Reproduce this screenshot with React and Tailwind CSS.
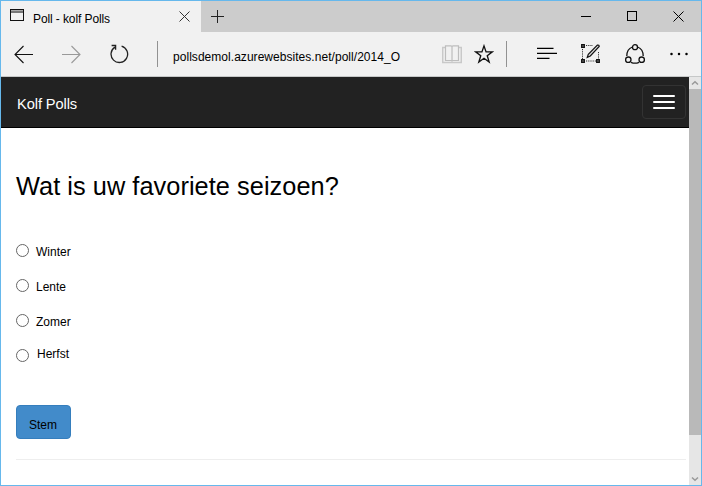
import React from 'react';

function TitleBar() {
  return (
    <header className="flex h-[31px] shrink-0 bg-[#cccccc]">
      <div className="flex w-[200px] bg-[#f1f1f1]">
        <svg className="ml-[9px] mt-[8px] h-[13px] w-[14px] shrink-0" viewBox="0 0 14 13" shapeRendering="crispEdges">
          <rect x="0.5" y="0.5" width="13" height="11" fill="none" stroke="#111" />
          <rect x="1" y="1" width="12" height="1" fill="#aaa" />
          <rect x="1" y="2" width="12" height="2" fill="#777" />
        </svg>
        <span className="ml-[9px] mt-[10px] w-[120px] whitespace-nowrap text-[12px] leading-4 tracking-[-0.1px] text-black">
          Poll - kolf Polls
        </span>
        <svg className="ml-[26px] mt-[10px] h-[11px] w-[11px] shrink-0" viewBox="0 0 11 11">
          <path d="M0.5 0.5 10.5 10.5M10.5 0.5 0.5 10.5" stroke="#333" fill="none" />
        </svg>
      </div>
      <svg className="ml-[10px] mt-[9px] h-[13px] w-[13px]" viewBox="0 0 13 13">
        <path d="M6.5 0v13M0 6.5h13" stroke="#222" fill="none" />
      </svg>
      <svg className="ml-auto mr-[17px] mt-[10px] h-[11px] w-[103px]" viewBox="0 0 103 11">
        <path d="M0 5.5h10" stroke="#000" />
        <rect x="46.5" y="0.5" width="9" height="9" fill="none" stroke="#000" />
        <path d="M92.5 0.5 102.5 10.5M102.5 0.5 92.5 10.5" stroke="#000" />
      </svg>
    </header>
  );
}

function Toolbar() {
  return (
    <div className="flex h-[45px] shrink-0 items-start border-b border-[#c6c8c8] bg-[#f1f1f1]">
      <svg className="ml-[13px] mt-[13px] h-[19px] w-[19px] shrink-0" viewBox="0 0 19 19">
        <path d="M19 9.5H0.8M9.5 1 1 9.5 9.5 18" stroke="#111" strokeWidth="1.1" fill="none" />
      </svg>
      <svg className="ml-[29px] mt-[13px] h-[19px] w-[19px] shrink-0" viewBox="0 0 19 19">
        <path d="M0 9.5h18.2M9.5 1 18 9.5 9.5 18" stroke="#999" strokeWidth="1.1" fill="none" />
      </svg>
      <svg className="ml-[28px] mt-[12px] h-[20px] w-[20px] shrink-0" viewBox="0 0 20 20">
        <path d="M12.6 2.2A8.3 8.3 0 1 1 6 3.1M2.600 1.500h4v4.200" stroke="#222" strokeWidth="1.300" fill="none" />
      </svg>
      <div className="ml-[28px] mt-[9px] h-[26px] w-px shrink-0 bg-[#929292]" />
      <span className="ml-[15px] mt-[17px] w-[240px] shrink-0 whitespace-nowrap text-[12px] leading-4 tracking-[0.04px] text-black">
        pollsdemol.azurewebsites.net/poll/2014_O
      </span>
      <svg className="ml-[29px] mt-[13px] h-[19px] w-[20px] shrink-0" viewBox="0 0 20 19">
        <path d="M3 2.500H.7v15h18.600v-15H17" stroke="#c9c9c9" strokeWidth="1.500" fill="none" />
        <path d="M3.500 15.500V.8H9q1 0 1 1.200 0-1.200 1-1.200h5.500v14.700H11q-1 0-1 1 0-1-1-1ZM10 2v14.500" stroke="#bdbdbd" strokeWidth="1.200" fill="none" />
      </svg>
      <svg className="ml-[12px] mt-[12px] h-[20px] w-[20px] shrink-0" viewBox="0 0 20 20">
        <path d="m10 1.900 2.050 6h6.200l-5 3.800 1.900 6.300L10 14.300 4.850 18l1.900-6.300-5-3.800h6.200Z" stroke="#111" strokeWidth="1.350" fill="none" />
      </svg>
      <div className="ml-[12px] mt-[9px] h-[26px] w-px shrink-0 bg-[#929292]" />
      <svg className="ml-[30px] mt-[15px] h-[13px] w-[20px] shrink-0" viewBox="0 0 20 13">
        <path d="M0 1.400h16.500M0 6.400h20M0 11.400h12.500" stroke="#000" strokeWidth="1.200" />
      </svg>
      <svg className="ml-[24px] mt-[12px] h-[20px] w-[20px] shrink-0" viewBox="0 0 20 20">
        <path d="M5 1.500h7M1.500 5v11M5 17h11M17.500 8v7" stroke="#333" strokeDasharray="1.200 1" fill="none" />
        <path d="M.7.700h2.600v2.600H.7zM.7 15.700h2.600v2.600H.7zM15.700 15.700h2.600v2.600h-2.600z" fill="#777" stroke="#111" strokeWidth="1.300" />
        <path d="m6.300 13.300 1-3L16.400 1q1.800-.2 1.800 1.500L9.300 12Z" fill="#ddd" stroke="#111" strokeWidth="1.200" />
      </svg>
      <svg className="ml-[24px] mt-[12px] h-[20px] w-[20px] shrink-0" viewBox="0 0 20 20">
        <g fill="none" stroke="#111" strokeWidth="1.300">
          <path d="M7.400 3Q1.800 5 1.800 12M12.600 3q5.600 2 5.600 9M6 18.300q4 1.800 8 0" />
          <circle cx="10" cy="3.200" r="2.500" />
          <circle cx="3.300" cy="15.700" r="2.700" />
          <circle cx="16.700" cy="15.700" r="2.700" />
        </g>
      </svg>
      <svg className="ml-[25px] mt-[20px] h-[4px] w-[18px] shrink-0" viewBox="0 0 18 4">
        <circle cx="1.500" cy="2" r="1.250" />
        <circle cx="9" cy="2" r="1.250" />
        <circle cx="16.500" cy="2" r="1.250" />
      </svg>
    </div>
  );
}

function Option({ label, className }) {
  return (
    <label className="flex h-[35px] items-start text-[12px] leading-4 text-black">
      <span className="mt-[11px] h-[13px] w-[13px] shrink-0 rounded-full border border-[#666] bg-white" />
      <span className={className}>{label}</span>
    </label>
  );
}

function Scrollbar() {
  return (
    <div className="flex w-[12px] shrink-0 flex-col bg-[#e6e6e6]">
      <svg className="h-[12px] w-[12px] shrink-0" viewBox="0 0 12 12">
        <path d="m3 7.500 3-2.800 3 2.800" fill="none" stroke="#999" strokeWidth="1.500" />
      </svg>
      <div className="h-[346px] bg-[#b9b9b9]" />
      <svg className="mt-auto h-[12px] w-[12px] shrink-0" viewBox="0 0 12 12">
        <path d="m3 4.500 3 2.800 3-2.800" fill="none" stroke="#999" strokeWidth="1.500" />
      </svg>
    </div>
  );
}

export default function App() {
  return (
    <div className="flex h-[486px] w-[702px] flex-col overflow-hidden border border-[#66b8ec] bg-white font-['Liberation_Sans',Arial,sans-serif]">
      <TitleBar />
      <Toolbar />
      <div className="flex min-h-0 flex-1">
        <main className="flex min-w-0 flex-1 flex-col">
          <nav className="flex h-[51px] shrink-0 items-start justify-between border-b border-black bg-[#222222] pl-[16px] pr-[3px]">
            <span className="mt-[17px] whitespace-nowrap text-[14.67px] leading-5 tracking-[-0.1px] text-white">Kolf Polls</span>
            <button className="mt-[8px] flex h-[34px] w-[44px] flex-col items-center justify-center gap-[4px] rounded-[4px] border border-[#333]">
              <span className="h-[2px] w-[22px] rounded-[1px] bg-white" />
              <span className="h-[2px] w-[22px] rounded-[1px] bg-white" />
              <span className="h-[2px] w-[22px] rounded-[1px] bg-white" />
            </button>
          </nav>
          <div className="flex flex-col pl-[15px] pr-[3px]">
            <h1 className="mt-[43px] whitespace-nowrap text-[25.33px] leading-[30px] tracking-[0.05px] text-black">Wat is uw favoriete seizoen?</h1>
            <form className="mt-[32px] flex flex-col items-start">
              <Option label="Winter" className="ml-[7px] mt-[11px]" />
              <Option label="Lente" className="ml-[7px] mt-[11px]" />
              <Option label="Zomer" className="ml-[7px] mt-[11px]" />
              <Option label="Herfst" className="ml-[8px] mt-[8px]" />
              <button type="button" className="mt-[32px] h-[34px] w-[55px] rounded-[4px] border border-[#357ebd] bg-[#428bca] pr-[1px] pt-[5px] text-[12px] leading-4 text-black">
                Stem
              </button>
            </form>
            <hr className="mt-[20px] border-t border-[#eeeeee]" />
          </div>
        </main>
        <Scrollbar />
      </div>
    </div>
  );
}
